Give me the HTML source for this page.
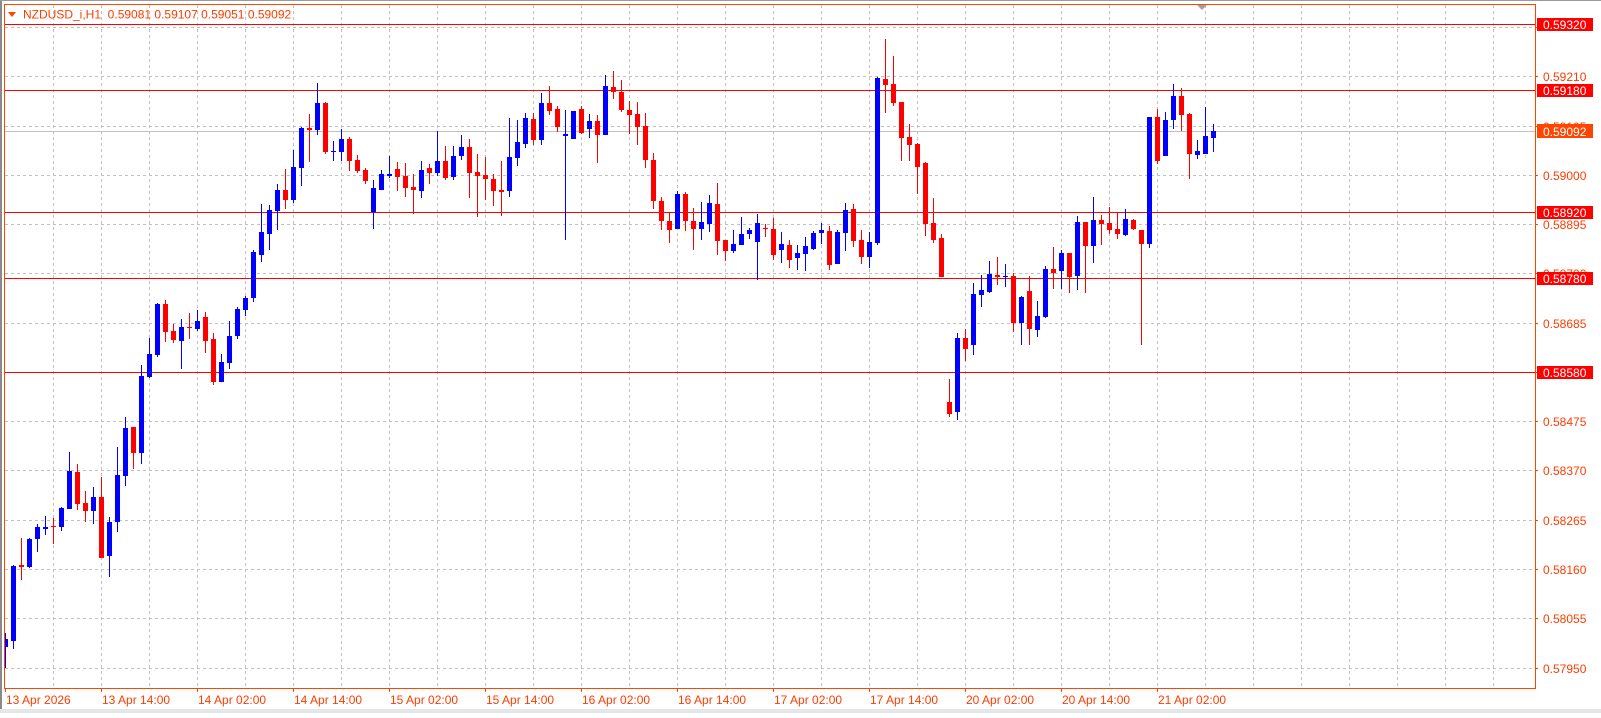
<!DOCTYPE html>
<html><head><meta charset="utf-8"><style>
html,body{margin:0;padding:0;background:#fff;}
body{width:1601px;height:713px;position:relative;overflow:hidden;font-family:"Liberation Sans",sans-serif;}
svg text{font-family:"Liberation Sans",sans-serif;font-size:12px;}
</style></head><body>
<svg width="1601" height="713" viewBox="0 0 1601 713" xmlns="http://www.w3.org/2000/svg">
<defs><clipPath id="c"><rect x="5" y="5" width="1530" height="683"/></clipPath></defs>
<rect x="0" y="0" width="1601" height="713" fill="#fff"/>
<rect x="0" y="0" width="2" height="713" fill="#8a8a8a"/>
<rect x="0" y="0" width="1601" height="1" fill="#9a9a9a"/>
<rect x="0" y="709" width="1601" height="4" fill="#e6e6e6"/>
<g clip-path="url(#c)">
<g stroke="#c0c0c0" stroke-width="1" stroke-dasharray="3,3" fill="none">
<path d="M53.5 5V688M101.5 5V688M149.5 5V688M197.5 5V688M245.5 5V688M293.5 5V688M341.5 5V688M389.5 5V688M437.5 5V688M485.5 5V688M533.5 5V688M581.5 5V688M629.5 5V688M677.5 5V688M725.5 5V688M773.5 5V688M821.5 5V688M869.5 5V688M917.5 5V688M965.5 5V688M1013.5 5V688M1061.5 5V688M1109.5 5V688M1157.5 5V688M1205.5 5V688M1253.5 5V688M1301.5 5V688M1349.5 5V688M1397.5 5V688M1445.5 5V688M1493.5 5V688"/>
<path d="M5 27.5H1535M5 76.5H1535M5 126.5H1535M5 175.5H1535M5 224.5H1535M5 273.5H1535M5 323.5H1535M5 372.5H1535M5 421.5H1535M5 470.5H1535M5 520.5H1535M5 569.5H1535M5 618.5H1535M5 668.5H1535"/>
</g>
<path d="M5 131.5H1535" stroke="#c0c0c0" stroke-width="1"/>
<path d="M5 24.5H1535M5 90.5H1535M5 212.5H1535M5 278.5H1535M5 372.5H1535" stroke="#ff0000" stroke-width="1"/>
<path fill="#0000ff" d="
M5 633h1v35h-1zM3 639h5v8h-5z
M13 565h1v84h-1zM11 566h5v75h-5z
M29 538h1v30h-1zM27 539h5v28h-5z
M37 524h1v28h-1zM35 527h5v12h-5z
M45 516h1v19h-1zM43 527h5v2h-5z
M61 507h1v24h-1zM59 508h5v19h-5z
M69 452h1v57h-1zM67 471h5v38h-5z
M93 487h1v37h-1zM91 497h5v14h-5z
M109 517h1v60h-1zM107 522h5v34h-5z
M117 447h1v85h-1zM115 475h5v47h-5z
M125 417h1v69h-1zM123 428h5v48h-5z
M141 365h1v99h-1zM139 376h5v77h-5z
M149 338h1v40h-1zM147 354h5v23h-5z
M157 303h1v54h-1zM155 304h5v51h-5z
M181 319h1v50h-1zM179 327h5v14h-5z
M197 310h1v21h-1zM195 321h5v8h-5z
M221 354h1v28h-1zM219 362h5v20h-5z
M229 321h1v48h-1zM227 336h5v27h-5z
M237 307h1v32h-1zM235 309h5v27h-5z
M245 296h1v20h-1zM243 298h5v12h-5z
M253 250h1v52h-1zM251 252h5v46h-5z
M261 204h1v58h-1zM259 232h5v23h-5z
M269 205h1v45h-1zM267 210h5v24h-5z
M277 184h1v46h-1zM275 190h5v21h-5z
M293 150h1v53h-1zM291 167h5v33h-5z
M301 127h1v59h-1zM299 128h5v40h-5z
M317 83h1v52h-1zM315 103h5v27h-5z
M333 141h1v20h-1zM331 151h5v1h-5z
M341 129h1v32h-1zM339 139h5v13h-5z
M373 180h1v49h-1zM371 188h5v24h-5z
M381 170h1v20h-1zM379 174h5v16h-5z
M389 156h1v22h-1zM387 174h5v2h-5z
M421 161h1v37h-1zM419 170h5v21h-5z
M437 131h1v45h-1zM435 161h5v12h-5z
M453 146h1v34h-1zM451 156h5v21h-5z
M461 135h1v25h-1zM459 147h5v9h-5z
M509 118h1v79h-1zM507 157h5v34h-5z
M517 120h1v46h-1zM515 142h5v16h-5z
M525 113h1v35h-1zM523 118h5v26h-5z
M541 93h1v52h-1zM539 103h5v37h-5z
M565 110h1v130h-1zM563 134h5v2h-5z
M573 111h1v28h-1zM571 111h5v28h-5z
M589 114h1v24h-1zM587 121h5v8h-5z
M605 75h1v60h-1zM603 86h5v49h-5z
M677 191h1v38h-1zM675 194h5v35h-5z
M701 202h1v38h-1zM699 222h5v7h-5z
M709 195h1v37h-1zM707 203h5v21h-5z
M733 230h1v23h-1zM731 244h5v7h-5z
M741 217h1v28h-1zM739 234h5v11h-5z
M749 228h1v11h-1zM747 230h5v4h-5z
M757 214h1v66h-1zM755 223h5v19h-5z
M781 232h1v31h-1zM779 244h5v6h-5z
M797 245h1v25h-1zM795 253h5v5h-5z
M805 237h1v34h-1zM803 246h5v8h-5z
M813 231h1v19h-1zM811 233h5v16h-5z
M821 223h1v21h-1zM819 230h5v3h-5z
M837 230h1v34h-1zM835 232h5v32h-5z
M845 203h1v48h-1zM843 210h5v23h-5z
M869 232h1v36h-1zM867 242h5v15h-5z
M877 77h1v168h-1zM875 78h5v165h-5z
M957 333h1v87h-1zM955 338h5v74h-5z
M973 283h1v72h-1zM971 294h5v51h-5z
M981 275h1v32h-1zM979 290h5v5h-5z
M989 261h1v32h-1zM987 274h5v18h-5z
M1005 264h1v23h-1zM1003 276h5v1h-5z
M1021 296h1v49h-1zM1019 297h5v26h-5z
M1037 301h1v36h-1zM1035 316h5v14h-5z
M1045 266h1v52h-1zM1043 269h5v48h-5z
M1061 250h1v39h-1zM1059 253h5v18h-5z
M1077 216h1v74h-1zM1075 222h5v54h-5z
M1093 197h1v66h-1zM1091 220h5v26h-5z
M1125 209h1v27h-1zM1123 219h5v16h-5z
M1149 117h1v131h-1zM1147 117h5v127h-5z
M1165 112h1v44h-1zM1163 120h5v36h-5z
M1173 84h1v45h-1zM1171 96h5v24h-5z
M1197 140h1v19h-1zM1195 151h5v4h-5z
M1205 107h1v47h-1zM1203 136h5v18h-5z
M1213 124h1v28h-1zM1211 131h5v7h-5z"/>
<path fill="#ff0000" d="
M21 538h1v42h-1zM19 565h5v2h-5z
M53 518h1v26h-1zM51 526h5v1h-5z
M77 464h1v46h-1zM75 472h5v32h-5z
M85 491h1v31h-1zM83 503h5v8h-5z
M101 477h1v81h-1zM99 497h5v61h-5z
M133 427h1v42h-1zM131 427h5v26h-5z
M165 300h1v42h-1zM163 304h5v28h-5z
M173 324h1v19h-1zM171 331h5v9h-5z
M189 313h1v26h-1zM187 327h5v1h-5z
M205 312h1v41h-1zM203 317h5v24h-5z
M213 333h1v52h-1zM211 339h5v43h-5z
M285 169h1v40h-1zM283 190h5v10h-5z
M309 114h1v48h-1zM307 128h5v2h-5z
M325 102h1v52h-1zM323 103h5v49h-5z
M349 137h1v34h-1zM347 139h5v22h-5z
M357 155h1v18h-1zM355 160h5v11h-5z
M365 168h1v16h-1zM363 170h5v11h-5z
M397 162h1v29h-1zM395 169h5v8h-5z
M405 163h1v34h-1zM403 176h5v12h-5z
M413 174h1v40h-1zM411 187h5v3h-5z
M429 164h1v20h-1zM427 168h5v5h-5z
M445 146h1v34h-1zM443 161h5v17h-5z
M469 139h1v59h-1zM467 147h5v26h-5z
M477 154h1v63h-1zM475 172h5v4h-5z
M485 157h1v43h-1zM483 175h5v4h-5z
M493 174h1v32h-1zM491 179h5v12h-5z
M501 161h1v55h-1zM499 190h5v2h-5z
M533 113h1v32h-1zM531 119h5v21h-5z
M549 86h1v29h-1zM547 103h5v8h-5z
M557 106h1v26h-1zM555 109h5v18h-5z
M581 106h1v28h-1zM579 109h5v24h-5z
M597 115h1v48h-1zM595 121h5v14h-5z
M613 71h1v28h-1zM611 87h5v5h-5z
M621 80h1v32h-1zM619 92h5v18h-5z
M629 101h1v33h-1zM627 110h5v5h-5z
M637 102h1v43h-1zM635 114h5v13h-5z
M645 113h1v55h-1zM643 126h5v34h-5z
M653 153h1v56h-1zM651 160h5v41h-5z
M661 197h1v33h-1zM659 201h5v20h-5z
M669 213h1v30h-1zM667 221h5v9h-5z
M685 192h1v39h-1zM683 194h5v27h-5z
M693 208h1v42h-1zM691 221h5v8h-5z
M717 183h1v72h-1zM715 204h5v37h-5z
M725 240h1v21h-1zM723 240h5v11h-5z
M765 224h1v13h-1zM763 228h5v1h-5z
M773 218h1v42h-1zM771 229h5v26h-5z
M789 240h1v28h-1zM787 245h5v15h-5z
M829 226h1v44h-1zM827 231h5v34h-5z
M853 204h1v43h-1zM851 209h5v32h-5z
M861 230h1v34h-1zM859 240h5v17h-5z
M885 39h1v74h-1zM883 79h5v6h-5z
M893 56h1v50h-1zM891 84h5v19h-5z
M901 102h1v59h-1zM899 102h5v36h-5z
M909 124h1v37h-1zM907 137h5v8h-5z
M917 143h1v51h-1zM915 144h5v23h-5z
M925 162h1v74h-1zM923 163h5v61h-5z
M933 198h1v45h-1zM931 223h5v17h-5z
M941 234h1v43h-1zM939 238h5v39h-5z
M949 379h1v38h-1zM947 402h5v12h-5z
M965 329h1v32h-1zM963 338h5v11h-5z
M997 257h1v28h-1zM995 275h5v2h-5z
M1013 273h1v59h-1zM1011 276h5v47h-5z
M1029 276h1v69h-1zM1027 291h5v38h-5z
M1053 247h1v42h-1zM1051 269h5v4h-5z
M1069 253h1v40h-1zM1067 253h5v24h-5z
M1085 222h1v71h-1zM1083 222h5v24h-5z
M1101 215h1v30h-1zM1099 220h5v4h-5z
M1109 207h1v27h-1zM1107 223h5v7h-5z
M1117 213h1v26h-1zM1115 229h5v5h-5z
M1133 219h1v11h-1zM1131 220h5v9h-5z
M1141 230h1v115h-1zM1139 230h5v14h-5z
M1157 109h1v55h-1zM1155 117h5v44h-5z
M1181 88h1v43h-1zM1179 96h5v19h-5z
M1189 113h1v66h-1zM1187 114h5v40h-5z"/>
</g>
<rect x="4.5" y="4.5" width="1531" height="684" fill="none" stroke="#ff4500" stroke-width="1"/>
<path d="M1197 5h10l-5 5z" fill="#a0a0a0"/>
<path d="M8 12h8l-4 5z" fill="#ff4500"/>
<text x="23" y="18.5" fill="#ff3c00">NZDUSD_i,H1&#160; 0.59081 0.59107 0.59051 0.59092</text>
<path d="M1535 27.5h3M1535 76.5h3M1535 126.5h3M1535 175.5h3M1535 224.5h3M1535 273.5h3M1535 323.5h3M1535 372.5h3M1535 421.5h3M1535 470.5h3M1535 520.5h3M1535 569.5h3M1535 618.5h3M1535 668.5h3" stroke="#ff4500"/>
<g fill="#ff3c00">
<text x="1543" y="81">0.59210</text>
<text x="1543" y="131">0.59105</text>
<text x="1543" y="180">0.59000</text>
<text x="1543" y="229">0.58895</text>
<text x="1543" y="278">0.58790</text>
<text x="1543" y="328">0.58685</text>
<text x="1543" y="426">0.58475</text>
<text x="1543" y="475">0.58370</text>
<text x="1543" y="525">0.58265</text>
<text x="1543" y="574">0.58160</text>
<text x="1543" y="623">0.58055</text>
<text x="1543" y="673">0.57950</text>
</g>
<g>
<rect x="1537" y="18" width="56" height="13" fill="#ff0000"/>
<rect x="1537" y="84" width="56" height="13" fill="#ff0000"/>
<rect x="1537" y="124" width="56" height="14" fill="#ff4500"/>
<rect x="1537" y="206" width="56" height="13" fill="#ff0000"/>
<rect x="1537" y="272" width="56" height="13" fill="#ff0000"/>
<rect x="1537" y="366" width="56" height="13" fill="#ff0000"/>
</g>
<g fill="#ffffff">
<text x="1543" y="29">0.59320</text>
<text x="1543" y="95">0.59180</text>
<text x="1543" y="136">0.59092</text>
<text x="1543" y="217">0.58920</text>
<text x="1543" y="283">0.58780</text>
<text x="1543" y="377">0.58580</text>
</g>
<path d="M5.5 688v4M101.5 688v4M197.5 688v4M293.5 688v4M389.5 688v4M485.5 688v4M581.5 688v4M677.5 688v4M773.5 688v4M869.5 688v4M965.5 688v4M1061.5 688v4M1157.5 688v4" stroke="#ff4500"/>
<g fill="#ff3c00">
<text x="6" y="704">13 Apr 2026</text>
<text x="102" y="704">13 Apr 14:00</text>
<text x="198" y="704">14 Apr 02:00</text>
<text x="294" y="704">14 Apr 14:00</text>
<text x="390" y="704">15 Apr 02:00</text>
<text x="486" y="704">15 Apr 14:00</text>
<text x="582" y="704">16 Apr 02:00</text>
<text x="678" y="704">16 Apr 14:00</text>
<text x="774" y="704">17 Apr 02:00</text>
<text x="870" y="704">17 Apr 14:00</text>
<text x="966" y="704">20 Apr 02:00</text>
<text x="1062" y="704">20 Apr 14:00</text>
<text x="1158" y="704">21 Apr 02:00</text>
</g>
</svg>
</body></html>
